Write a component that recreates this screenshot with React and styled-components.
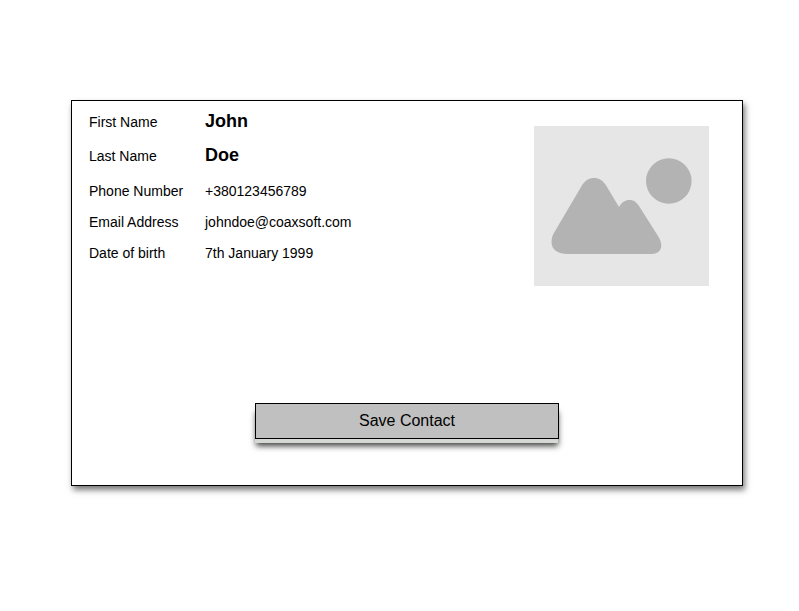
import React from "react";
import styled, { createGlobalStyle } from "styled-components";

const GlobalStyle = createGlobalStyle`
  *, *::before, *::after {
    box-sizing: border-box;
  }
  body {
    margin: 0;
    background: #fff;
    color: #000;
    font-family: "Liberation Sans", Arial, Helvetica, sans-serif;
  }
`;

const Page = styled.main`
  min-height: 611px;
  padding: 100px 0 0 71px;
`;

const Card = styled.section`
  display: flex;
  flex-direction: column;
  justify-content: space-between;
  align-items: center;
  width: 672px;
  height: 386px;
  padding: 5px 0 46px;
  border: 1px solid #000;
  background: #fff;
  box-shadow: 2px 4px 6px rgba(0, 0, 0, 0.53);
`;

const Summary = styled.div`
  display: flex;
  justify-content: space-between;
  align-items: flex-start;
  width: 100%;
  padding: 0 33px 0 17px;
`;

const Details = styled.dl`
  display: grid;
  grid-template-rows: 34px 36px 31px 31px 31px;
  margin: 0;
`;

const Field = styled.div`
  display: grid;
  grid-template-columns: 116px auto;
  align-items: baseline;
  line-height: 30px;
`;

const Label = styled.dt`
  font-size: 14px;
`;

const Value = styled.dd`
  margin: 0;
  font-size: ${({ $strong }) => ($strong ? 18 : 14)}px;
  font-weight: ${({ $strong }) => ($strong ? 700 : 400)};
`;

const Photo = styled.svg`
  display: block;
  width: 175px;
  height: 160px;
  margin-top: 20px;
  background: #e6e6e6;
  fill: #b3b3b3;
`;

const SaveButton = styled.button`
  width: 304px;
  height: 36px;
  margin: 0;
  padding: 0;
  border: 1px solid #000;
  background: #c0c0c0;
  box-shadow:
    -0.5px 4.5px 0 -0.5px #d5d8d5,
    0 8px 6px -1px rgba(0, 0, 0, 0.75);
  color: #000;
  font: 16px/34px "Liberation Sans", Arial, Helvetica, sans-serif;
`;

const fields = [
  { label: "First Name", value: "John", strong: true },
  { label: "Last Name", value: "Doe", strong: true },
  { label: "Phone Number", value: "+380123456789" },
  { label: "Email Address", value: "johndoe@coaxsoft.com" },
  { label: "Date of birth", value: "7th January 1999" },
];

function PhotoPlaceholder() {
  return (
    <Photo viewBox="0 0 175 160" role="img" aria-label="Contact photo">
      <circle cx="134.8" cy="55" r="22.8" />
      <path d="M47 61C51 54 55 52 60 52C65 52 69 54 73 61L85 81C88 76 91 74 95.500 74C100 74 102 76 105 80L124 110C126 113 127.500 117 127.300 120C127 125 123 128 117.500 128H34C24 128 17.500 124 17.500 116C17.500 112 18.500 109 20.500 106Z" />
    </Photo>
  );
}

export default function App() {
  return (
    <>
      <GlobalStyle />
      <Page>
        <Card>
          <Summary>
            <Details>
              {fields.map(({ label, value, strong }) => (
                <Field key={label}>
                  <Label>{label}</Label>
                  <Value $strong={strong}>{value}</Value>
                </Field>
              ))}
            </Details>
            <PhotoPlaceholder />
          </Summary>
          <SaveButton type="button">Save Contact</SaveButton>
        </Card>
      </Page>
    </>
  );
}
